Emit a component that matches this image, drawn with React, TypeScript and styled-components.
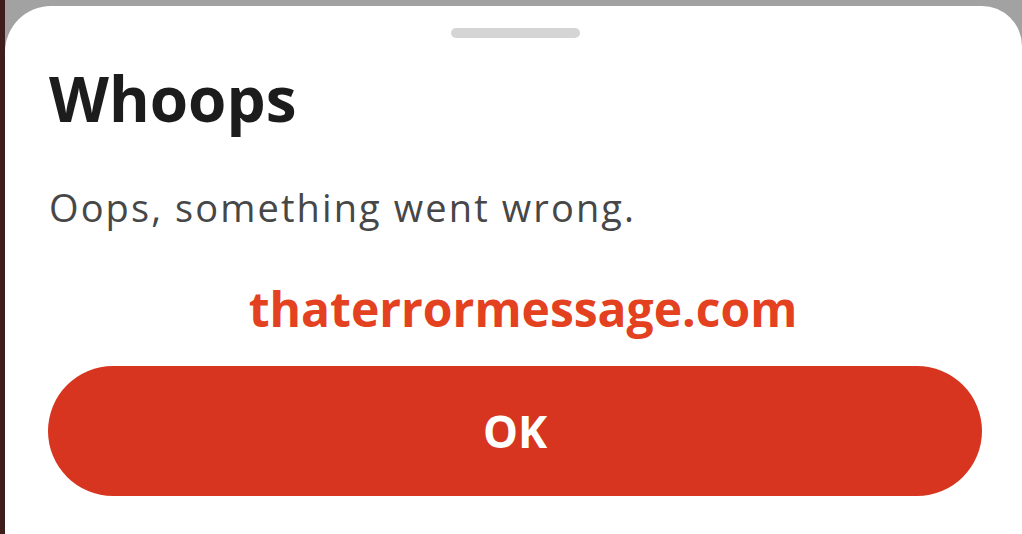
import styled, { createGlobalStyle } from 'styled-components';

const GlobalStyle = createGlobalStyle`
  html, body {
    margin: 0;
    padding: 0;
    height: 100%;
    overflow: hidden;
  }
  body {
    font-family: 'Open Sans', 'Liberation Sans', sans-serif;
  }
  #root {
    height: 100%;
  }
`;

const Frame = styled.div`
  display: flex;
  width: 1022px;
  height: 534px;
  background-color: #a2a2a2;
`;

const EdgeStrip = styled.div`
  width: 5px;
  flex-shrink: 0;
  background-color: #3e1d1c;
`;

const Area = styled.div`
  flex: 1;
  display: flex;
  flex-direction: column;
  padding-top: 6px;
`;

const Sheet = styled.div`
  flex: 1;
  background-color: #ffffff;
  border-top-left-radius: 46px;
  border-top-right-radius: 40px;
  display: flex;
  flex-direction: column;
  padding: 22px 40px 0 43px;
`;

const Handle = styled.div`
  align-self: center;
  width: 129px;
  height: 10px;
  border-radius: 5px;
  background-color: #d5d5d5;
`;

const Title = styled.h1`
  margin: 25px 0 0 1px;
  font-size: 62px;
  line-height: 70px;
  font-weight: 700;
  color: #1c1c1c;
`;

const Message = styled.p`
  margin: 52px 0 0 1px;
  font-size: 38px;
  line-height: 44px;
  font-weight: 400;
  letter-spacing: 2.1px;
  color: #474747;
`;

const Watermark = styled.div`
  margin: 52px 0 0 16px;
  text-align: center;
  font-size: 48px;
  line-height: 56px;
  font-weight: 700;
  color: #e3411f;
`;

const OkButton = styled.button`
  margin-top: 29px;
  height: 130px;
  flex-shrink: 0;
  border: none;
  border-radius: 65px;
  background-color: #d7351f;
  color: #ffffff;
  font-family: 'Open Sans', 'Liberation Sans', sans-serif;
  font-size: 44px;
  font-weight: 700;
  cursor: pointer;
`;

const App = () => {
  return (
    <>
      <GlobalStyle />
      <Frame>
        <EdgeStrip />
        <Area>
          <Sheet>
            <Handle />
            <Title>Whoops</Title>
            <Message>Oops, something went wrong.</Message>
            <Watermark>thaterrormessage.com</Watermark>
            <OkButton>OK</OkButton>
          </Sheet>
        </Area>
      </Frame>
    </>
  );
};

export default App;
